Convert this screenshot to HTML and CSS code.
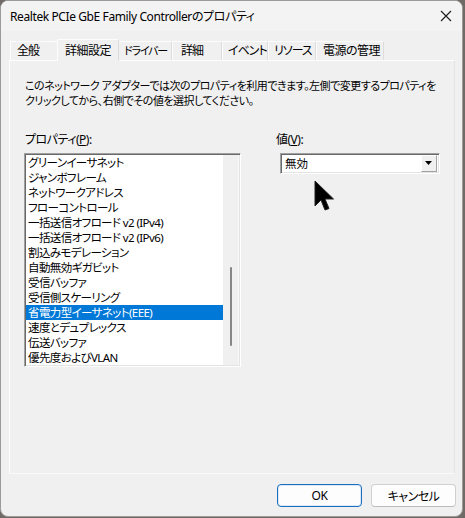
FILE: index.html
```html
<!DOCTYPE html>
<html lang="ja">
<head>
    <meta charset="UTF-8">
    <title>Realtek PCIe GbE Family Controllerのプロパティ</title>
    <link rel="stylesheet" href="styles.css">
</head>
<body>
    <div class="window">
        <!-- Title bar -->
        <div class="titlebar">
            <span class="title">Realtek PCIe GbE Family Controllerのプロパティ</span>
            <svg class="close" width="12" height="12" viewBox="0 0 12 12">
                <path d="M1 1 L11 11 M11 1 L1 11" stroke="#1a1a1a" stroke-width="1.1" fill="none"/>
            </svg>
        </div>

        <!-- Tabs -->
        <div class="tabs">
            <div class="tab w-general">全般</div>
            <div class="tab active">詳細設定</div>
            <div class="tab w-driver">ドライバー</div>
            <div class="tab w-details">詳細</div>
            <div class="tab w-events">イベント</div>
            <div class="tab w-resources">リソース</div>
            <div class="tab w-power">電源の管理</div>
        </div>

        <div class="panel">
            <p class="desc">このネットワーク アダプターでは次のプロパティを利用できます。左側で変更するプロパティを<br>クリックしてから、右側でその値を選択してください。</p>

            <div class="columns">
                <div class="col-left">
                    <div class="label">プロパティ(<u>P</u>):</div>
                    <div class="listbox">
                        <ul class="items">
                            <li>グリーンイーサネット</li>
                            <li>ジャンボフレーム</li>
                            <li>ネットワークアドレス</li>
                            <li>フローコントロール</li>
                            <li>一括送信オフロード v2 (IPv4)</li>
                            <li>一括送信オフロード v2 (IPv6)</li>
                            <li>割込みモデレーション</li>
                            <li>自動無効ギガビット</li>
                            <li>受信バッファ</li>
                            <li>受信側スケーリング</li>
                            <li class="selected">省電力型イーサネット(EEE)</li>
                            <li>速度とデュプレックス</li>
                            <li>伝送バッファ</li>
                            <li>優先度およびVLAN</li>
                        </ul>
                        <div class="scrollbar"><div class="thumb"></div></div>
                    </div>
                </div>

                <div class="col-right">
                    <div class="label">値(<u>V</u>):</div>
                    <div class="select">
                        <span class="value">無効</span>
                        <div class="arrow">
                            <svg width="8" height="5" viewBox="0 0 8 5"><path d="M0 0 H7 L3.5 4 Z" fill="#000"/></svg>
                        </div>
                    </div>
                </div>
            </div>
        </div>

        <div class="buttons">
            <button class="btn primary">OK</button>
            <button class="btn">キャンセル</button>
        </div>

        <!-- Mouse pointer -->
        <svg class="cursor" width="22" height="32" viewBox="0 0 22 32">
            <path d="M1 1 L1 26 L7 20 L11 30 L15 28.5 L11 19 L19.5 19 Z" fill="#000" stroke="#222" stroke-width="1"/>
        </svg>
    </div>
</body>
</html>
```

FILE: styles.css
```css
* {
    margin: 0;
    padding: 0;
    box-sizing: border-box;
}

body {
    background: #6f6a66;
    font-family: "Noto Sans", "Noto Sans CJK JP", sans-serif;
    font-size: 12px;
    font-feature-settings: "palt";
    color: #000;
}

.window {
    position: relative;
    width: 463px;
    height: 517px;
    background: #f0f0f0;
    border: 1px solid #9b9b9b;
    border-radius: 8px;
    overflow: hidden;
    display: flex;
    flex-direction: column;
}

.titlebar {
    height: 30px;
    display: flex;
    align-items: center;
    justify-content: space-between;
    padding: 1px 10px 0 9px;
    background: #f3f3f3;
}

.title {
    line-height: 16px;
    letter-spacing: -0.4px;
}

.close {
    margin-top: -1px;
}

/* Tabs */
.tabs {
    display: flex;
    align-items: flex-end;
    height: 22px;
    margin-top: 8px;
    padding-left: 9px;
    position: relative;
    z-index: 1;
}

.tab {
    height: 19px;
    padding: 0 6px;
    line-height: 18px;
    letter-spacing: -1px;
    white-space: nowrap;
    overflow: hidden;
    border: 1px solid #fcfcfc;
    border-right-color: #dcdcdc;
    border-bottom: none;
    background: #f0f0f0;
    margin-bottom: 1px;
}

.tab.active {
    width: 62px;
    height: 22px;
    margin: 0 -2px;
    padding: 0 7px;
    line-height: 21px;
    letter-spacing: -0.5px;
    margin-bottom: 0;
    position: relative;
    z-index: 2;
}

.w-general { width: 49px; }
.w-driver { width: 55px; padding: 0 2px 0 6px; font-size: 11px; letter-spacing: -1.2px; }
.w-details { width: 50px; padding-left: 8px; }
.w-events { width: 46px; padding-left: 5px; }
.w-resources { width: 48px; padding-left: 5px; }
.w-power { width: 68px; padding-left: 6px; letter-spacing: -0.5px; }

/* Page */
.panel {
    margin: -1px 0 0 8px;
    width: 446px;
    height: 414px;
    border: 1px solid #fdfdfd;
    border-right-color: #e4e4e4;
    border-bottom-color: #fafafa;
    padding: 17px 15px 0 15px;
}

.desc {
    font-size: 11px;
    letter-spacing: -0.5px;
    line-height: 15px;
    white-space: nowrap;
}

.columns {
    display: grid;
    grid-template-columns: 251px 1fr;
    margin-top: 24px;
}

.label {
    line-height: 16px;
    margin-bottom: 5px;
    letter-spacing: -0.5px;
}

.listbox {
    margin-left: -1px;
    width: 217px;
    height: 214px;
    display: flex;
    background: #fff;
    border: 1px solid #a0a0a0;
    border-right-color: #fff;
    border-bottom-color: #fff;
    box-shadow: inset 1px 1px 0 #696969, inset -1px -1px 0 #e3e3e3;
    padding: 1px;
}

.items {
    list-style: none;
    width: 197px;
}

.items li {
    height: 15px;
    line-height: 15px;
    padding-left: 2px;
    font-size: 11.5px;
    letter-spacing: -0.6px;
    white-space: nowrap;
}

.items li.selected {
    background: #0078d7;
    color: #fff;
}

.scrollbar {
    flex: 1;
    background: #f0f0f0;
    border-right: 1px solid #f8f8f8;
    padding-top: 112px;
}

.thumb {
    width: 2px;
    height: 79px;
    margin-left: 7px;
    background: #868686;
    border-radius: 1px;
}

.select {
    margin-left: 4px;
    width: 160px;
    height: 21px;
    display: flex;
    align-items: center;
    justify-content: space-between;
    background: #fff;
    border: 1px solid #a0a0a0;
    border-right-color: #fff;
    border-bottom-color: #fff;
    box-shadow: inset 1px 1px 0 #696969, inset -1px -1px 0 #e3e3e3;
    padding: 1px 2px 1px 4px;
}

.value {
    line-height: 17px;
    font-size: 11.5px;
}

.arrow {
    width: 16px;
    height: 17px;
    background: #f0f0f0;
    border: 1px solid #fff;
    border-right-color: #a0a0a0;
    border-bottom-color: #a0a0a0;
    display: flex;
    align-items: center;
    justify-content: center;
}

/* Bottom buttons */
.buttons {
    display: flex;
    justify-content: flex-end;
    gap: 9px;
    margin-top: 10px;
    padding-right: 6px;
}

.btn {
    width: 85px;
    height: 23px;
    font-family: "Noto Sans", "Noto Sans CJK JP", sans-serif;
    font-size: 12px;
    font-feature-settings: "palt";
    letter-spacing: -0.5px;
    background: #fdfdfd;
    border: 1px solid #d0d0d0;
    border-bottom-color: #bdbdbd;
    border-radius: 4px;
    color: #000;
}

.btn.primary {
    border: 1px solid #1a6fbf;
    box-shadow: inset 0 0 0 1px #dbe9f7;
}

.cursor {
    position: absolute;
    left: 313px;
    top: 179px;
}
```
